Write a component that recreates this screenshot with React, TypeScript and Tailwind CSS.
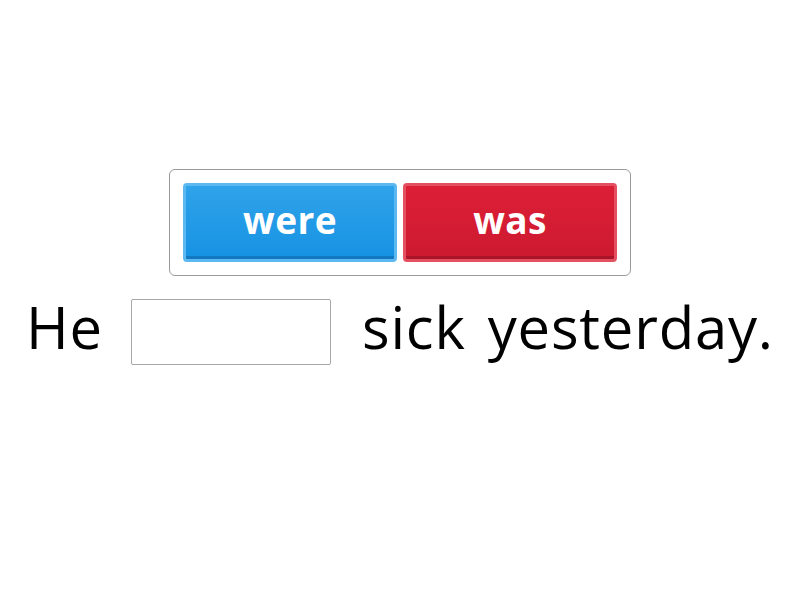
const words = ['sick', 'yesterday.'];

function Tile({ label, tone }: { label: string; tone: 'blue' | 'red' }) {
  const skin =
    tone === 'blue'
      ? 'border-[#5cb8f0] bg-gradient-to-b from-[#2fa3ea] to-[#1592e3] shadow-[inset_0_-3px_0_#1478c0]'
      : 'border-[#e4505f] bg-gradient-to-b from-[#dd1f36] to-[#cc1a30] shadow-[inset_0_-3px_0_#a8142a]';
  return (
    <button
      className={`flex h-[79px] w-[214px] items-center justify-center rounded-[4px] border-[3px] text-[37px] font-bold tracking-[0.4px] text-white ${skin}`}
      style={{ fontFamily: '"Open Sans", sans-serif' }}
    >
      <span className="-mt-[6px]">{label}</span>
    </button>
  );
}

export default function App() {
  return (
    <div
      className="flex h-[600px] w-[800px] flex-col items-center bg-white pt-[169px]"
      style={{ fontFamily: '"Open Sans", sans-serif' }}
    >
      <div className="flex gap-[6px] rounded-[6px] border border-[#9a9a9a] bg-white p-[13px]">
        <Tile label="were" tone="blue" />
        <Tile label="was" tone="red" />
      </div>
      <div className="mt-[23px] flex w-full items-center pl-[26px] text-[58px] leading-none tracking-[0.8px] text-black">
        <span className="-mt-[10px]">He</span>
        <div className="ml-[28px] mr-[31px] h-[66px] w-[200px] rounded-[2px] border border-[#a8a8a8] bg-white" />
        <div className="-mt-[10px] flex gap-[22px]">
          {words.map((w) => (
            <span key={w}>{w}</span>
          ))}
        </div>
      </div>
    </div>
  );
}
